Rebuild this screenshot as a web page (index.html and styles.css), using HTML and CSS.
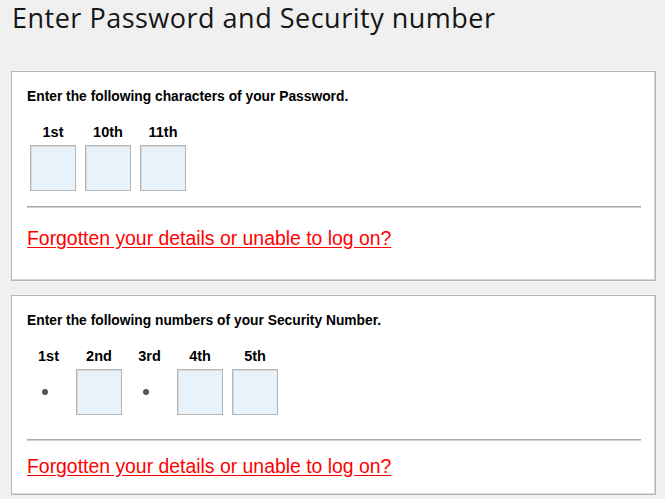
FILE: index.html
```html
<!DOCTYPE html>
<html lang="en">
<head>
<meta charset="utf-8">
<title>Enter Password and Security number</title>
<link rel="stylesheet" href="styles.css">
</head>
<body>
<h1 class="page-title">Enter Password and Security number</h1>

<section class="panel panel-password">
  <p class="panel-heading">Enter the following characters of your Password.</p>
  <div class="chars">
    <div class="char"><span class="char-label">1st</span><input class="char-box" type="password" maxlength="1"></div>
    <div class="char"><span class="char-label">10th</span><input class="char-box" type="password" maxlength="1"></div>
    <div class="char"><span class="char-label">11th</span><input class="char-box" type="password" maxlength="1"></div>
  </div>
  <hr class="divider">
  <a class="help-link" href="#">Forgotten your details or unable to log on?</a>
</section>

<section class="panel panel-security">
  <p class="panel-heading">Enter the following numbers of your Security Number.</p>
  <div class="chars chars-security">
    <div class="char char-fixed"><span class="char-label">1st</span><span class="char-slot"><span class="dot"></span></span></div>
    <div class="char"><span class="char-label">2nd</span><input class="char-box" type="password" maxlength="1"></div>
    <div class="char char-fixed"><span class="char-label">3rd</span><span class="char-slot"><span class="dot"></span></span></div>
    <div class="char"><span class="char-label">4th</span><input class="char-box" type="password" maxlength="1"></div>
    <div class="char"><span class="char-label">5th</span><input class="char-box" type="password" maxlength="1"></div>
  </div>
  <hr class="divider">
  <a class="help-link" href="#">Forgotten your details or unable to log on?</a>
</section>
</body>
</html>
```

FILE: styles.css
```css
html, body {
  margin: 0;
  padding: 0;
  background: #f0f0f0;
}

body {
  font-family: "Liberation Sans", Arial, sans-serif;
  color: #000;
  padding: 0 9px 0 11px;
}

.page-title {
  margin: 0;
  padding: 0 0 0 1px;
  height: 71px;
  font-family: "Open Sans", "Noto Sans", sans-serif;
  font-weight: 400;
  font-size: 27px;
  line-height: 36px;
  color: #161616;
  letter-spacing: 0.5px;
  white-space: nowrap;
}

.panel {
  background: #fff;
  border: 1px solid #b6b6b6;
  box-shadow: inset -1px -1px 0 #d6d6d6;
  padding: 17px 14px 0 15px;
}

.panel-password {
  height: 191px;
  margin-bottom: 14px;
}

.panel-security {
  height: 181px;
}

.panel-heading {
  margin: 0;
  font-size: 13.8px;
  font-weight: bold;
  line-height: 16px;
}

.chars {
  display: flex;
  gap: 9px;
  margin: 19px 0 0 3px;
}

.char {
  display: flex;
  flex-direction: column;
  align-items: center;
  gap: 5px;
}

.char-label {
  font-size: 14.5px;
  font-weight: bold;
  line-height: 16px;
}

.char-box {
  display: block;
  box-sizing: border-box;
  width: 46px;
  height: 46px;
  margin: 0;
  padding: 0;
  border: 1px solid #b4b4b4;
  box-shadow: inset 1px 1px 0 #dadada;
  background: #e8f2fb;
  -webkit-appearance: none;
  appearance: none;
  outline: none;
}

.char-fixed {
  width: 37px;
}

.char-slot {
  display: flex;
  align-items: center;
  justify-content: center;
  width: 37px;
  height: 46px;
}

.dot {
  width: 6px;
  height: 6px;
  border-radius: 50%;
  background: #555;
  margin-right: 8px;
}

.divider {
  border: 0;
  height: 2px;
  background: linear-gradient(#aaaaaa 50%, #cfcfcf 50%);
  margin: 15px 0 0 0;
}

.chars-security + .divider {
  margin-top: 24px;
}

.help-link {
  display: inline-block;
  margin-top: 19px;
  font-size: 19.4px;
  line-height: 22px;
  color: #ff0000;
  text-decoration: underline;
  text-underline-offset: 2px;
}

.panel-security .help-link {
  margin-top: 14px;
}
```
